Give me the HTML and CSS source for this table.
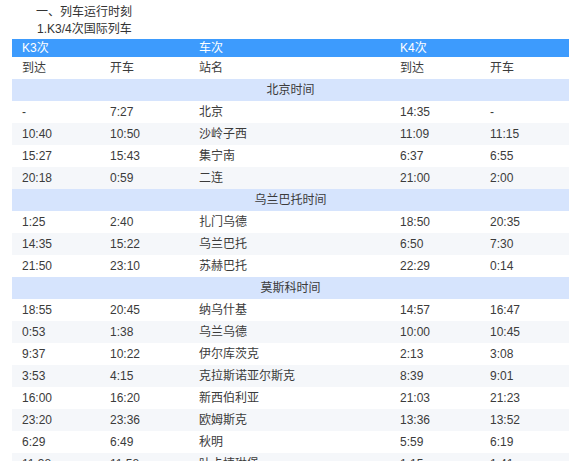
FILE: index.html
```html
<!DOCTYPE html>
<html lang="zh">
<head>
<meta charset="utf-8">
<link rel="stylesheet" href="styles.css">
</head>
<body>
<div class="page">
  <p class="title">一、列车运行时刻</p>
  <p class="subtitle">1.K3/4次国际列车</p>
  <table class="tt">
    <colgroup>
      <col class="c1"><col class="c2"><col class="c3"><col class="c4"><col class="c5">
    </colgroup>
    <tr class="head"><td colspan="2">K3次</td><td>车次</td><td colspan="2">K4次</td></tr>
    <tr><td>到达</td><td>开车</td><td>站名</td><td>到达</td><td>开车</td></tr>
    <tr class="sec"><td colspan="5">北京时间</td></tr>
    <tr><td>-</td><td>7:27</td><td>北京</td><td>14:35</td><td>-</td></tr>
    <tr class="alt"><td>10:40</td><td>10:50</td><td>沙岭子西</td><td>11:09</td><td>11:15</td></tr>
    <tr><td>15:27</td><td>15:43</td><td>集宁南</td><td>6:37</td><td>6:55</td></tr>
    <tr class="alt"><td>20:18</td><td>0:59</td><td>二连</td><td>21:00</td><td>2:00</td></tr>
    <tr class="sec"><td colspan="5">乌兰巴托时间</td></tr>
    <tr><td>1:25</td><td>2:40</td><td>扎门乌德</td><td>18:50</td><td>20:35</td></tr>
    <tr class="alt"><td>14:35</td><td>15:22</td><td>乌兰巴托</td><td>6:50</td><td>7:30</td></tr>
    <tr><td>21:50</td><td>23:10</td><td>苏赫巴托</td><td>22:29</td><td>0:14</td></tr>
    <tr class="sec"><td colspan="5">莫斯科时间</td></tr>
    <tr><td>18:55</td><td>20:45</td><td>纳乌什基</td><td>14:57</td><td>16:47</td></tr>
    <tr class="alt"><td>0:53</td><td>1:38</td><td>乌兰乌德</td><td>10:00</td><td>10:45</td></tr>
    <tr><td>9:37</td><td>10:22</td><td>伊尔库茨克</td><td>2:13</td><td>3:08</td></tr>
    <tr class="alt"><td>3:53</td><td>4:15</td><td>克拉斯诺亚尔斯克</td><td>8:39</td><td>9:01</td></tr>
    <tr><td>16:00</td><td>16:20</td><td>新西伯利亚</td><td>21:03</td><td>21:23</td></tr>
    <tr class="alt"><td>23:20</td><td>23:36</td><td>欧姆斯克</td><td>13:36</td><td>13:52</td></tr>
    <tr><td>6:29</td><td>6:49</td><td>秋明</td><td>5:59</td><td>6:19</td></tr>
    <tr class="alt"><td>11:38</td><td>11:58</td><td>叶卡捷琳堡</td><td>1:15</td><td>1:41</td></tr>
  </table>
</div>
</body>
</html>
```

FILE: styles.css
```css
html, body {
  margin: 0;
  padding: 0;
  background: #ffffff;
}
body {
  font-family: "Liberation Sans", "Noto Sans CJK SC", sans-serif;
  font-size: 12px;
  color: #333333;
}
.page {
  padding: 4px 0 0 12px;
}
.title, .subtitle {
  margin: 0;
  padding-left: 24px;
  line-height: 17px;
  color: #333333;
}
.subtitle {
  padding-left: 25px;
}
.tt {
  margin-top: 1px;
  width: 557px;
  border-collapse: collapse;
  table-layout: fixed;
}
.c1 { width: 88px; }
.c2 { width: 89px; }
.c3 { width: 201px; }
.c4 { width: 90px; }
.c5 { width: 89px; }
.tt td {
  height: 22px;
  padding: 0 0 0 10px;
  line-height: 22px;
  white-space: nowrap;
  overflow: hidden;
  color: #3b3b3b;
}
.tt .head td {
  height: 18px;
  line-height: 18px;
  background: #3d9bfd;
  color: #ffffff;
}
.tt .sec td {
  background: #d6e4fd;
  text-align: center;
  padding: 0;
}
.tt .alt td {
  background: #f5f7fa;
}
```
